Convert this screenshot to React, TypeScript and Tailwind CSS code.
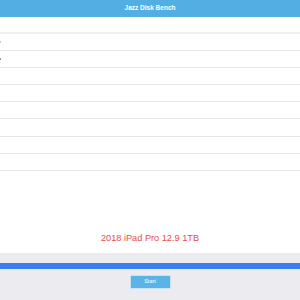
import React from "react";

export default function App() {
  const rows = [0, 1, 2, 3, 4, 5, 6, 7];
  return (
    <div className="w-[300px] h-[300px] flex flex-col bg-white overflow-hidden" style={{ fontFamily: '"Liberation Sans", Arial, sans-serif' }}>
      <div className="h-[17px] bg-[#53aee3] flex items-center justify-center text-white font-bold text-[6.5px] leading-none">
        Jazz Disk Bench
      </div>
      <div className="h-[15px] bg-white" />
      <div className="h-[2px] bg-[#efefef]" />
      <div className="flex flex-col">
        {rows.map((i) => (
          <div key={i} className="h-[17.1px] border-b border-[#e6e6e6] flex items-center">
            {i < 2 ? (
              <div className={`w-[1px] h-[2px] ${i === 0 ? "bg-[#cccccc]" : "bg-[#999999]"}`} />
            ) : null}
          </div>
        ))}
      </div>
      <div className="flex-1 flex flex-col justify-end items-center pb-[10px]">
        <div className="text-[#ea4a52] text-[9.2px] leading-none">2018 iPad Pro 12.9 1TB</div>
      </div>
      <div className="h-[47px] bg-[#ebebf0] flex flex-col items-center">
        <div className="h-[10px]" />
        <div className="w-full h-[6px] bg-[#3a7ff2]" />
        <div className="h-[6px]" />
        <div className="w-[41px] h-[14px] bg-[#5ab4e8] border border-[#c9e3f3] flex items-center justify-center text-white text-[5.5px] leading-none">
          Start
        </div>
      </div>
    </div>
  );
}
